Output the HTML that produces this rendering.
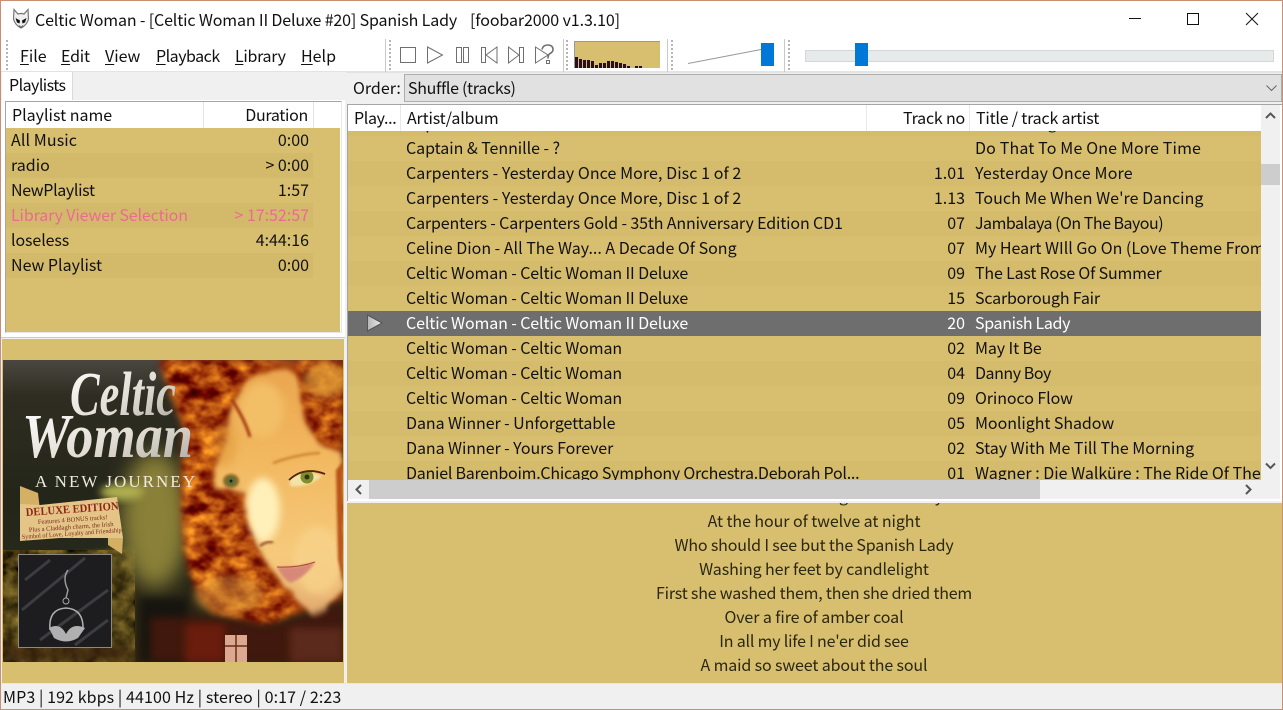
<!DOCTYPE html>
<html><head><meta charset="utf-8">
<style>
html,body{margin:0;padding:0;width:1283px;height:710px;overflow:hidden;background:#f0f0f0}
body{font-family:"Noto Sans CJK SC","Liberation Sans",sans-serif;font-size:16px;color:#111;position:relative}
.a{position:absolute;white-space:nowrap;overflow:hidden}
.t{position:absolute;white-space:nowrap;line-height:25px;height:25px}
.r{text-align:right}
.row{position:absolute;left:0;width:913px;height:25px}
.alt{background:#d5bc6d}
.row .t{top:-1px}
.dots{position:absolute;width:2px;top:40px;height:30px;background:repeating-linear-gradient(to bottom,#b5b5b5 0 2px,transparent 2px 4px)}
.sep{position:absolute;width:1px;top:39px;height:33px;background:#c9c9c9}
.u{text-decoration:underline;text-underline-offset:2px;text-decoration-thickness:1px}
.no{left:519px;width:98px;text-align:right}
.ar{left:58px}
.ti{left:627px}
</style></head><body>
<!-- Title bar -->
<div class="a" style="left:0;top:0;width:1283px;height:38px;background:#fff"></div>
<svg class="a" style="left:11px;top:8px" width="20" height="22" viewBox="0 0 20 22"><path d="M3 1.500 L7 6 Q10 5 13 6 L17 1.500 L17.500 11 Q16 17 10 20 Q4 17 2.500 11Z" fill="#f0f0f0" stroke="#777" stroke-width="1.200"/><path d="M4.500 10 L9 12.500 L8.500 15.500 L6 14.500Z M15.500 10 L11 12.500 L11.500 15.500 L14 14.500Z" fill="#111"/><path d="M8 17.500L10 19.500L12 17.500" stroke="#555" fill="none"/></svg>
<div class="t" style="left:35px;top:7px;letter-spacing:-.14px">Celtic Woman - [Celtic Woman II Deluxe #20] Spanish Lady</div>
<div class="t" style="left:470px;top:7px;letter-spacing:-.1px">[foobar2000 v1.3.10]</div>
<svg class="a" style="left:1120px;top:5px" width="155" height="30" fill="none" stroke="#111" stroke-width="1"><path d="M9 13.500H21"/><rect x="67.500" y="8.500" width="11" height="11"/><path d="M126 8L138 20M138 8L126 20"/></svg>

<!-- Toolbar -->
<div class="a" style="left:0;top:38px;width:1283px;height:34px;background:#fff"></div>
<div class="a" style="left:0;top:71px;width:1283px;height:2px;background:#e3e3e3"></div>
<div class="dots" style="left:6px"></div>
<div class="t" style="left:20px;top:43px"><span class="u">F</span>ile</div>
<div class="t" style="left:61px;top:43px;letter-spacing:-.2px"><span class="u">E</span>dit</div>
<div class="t" style="left:105px;top:43px"><span class="u">V</span>iew</div>
<div class="t" style="left:156px;top:43px;letter-spacing:-.5px"><span class="u">P</span>layback</div>
<div class="t" style="left:235px;top:43px;letter-spacing:-.3px"><span class="u">L</span>ibrary</div>
<div class="t" style="left:301px;top:43px"><span class="u">H</span>elp</div>
<div class="sep" style="left:385px"></div><div class="dots" style="left:389px"></div>
<svg class="a" style="left:395px;top:40px" width="165" height="30" fill="none" stroke="#6f6f6f" stroke-width="1">
<rect x="5.500" y="7.500" width="15" height="15"/>
<path d="M32.500 7 L47.500 15 L32.500 23Z"/>
<rect x="61.500" y="7.500" width="5" height="15"/><rect x="68.500" y="7.500" width="5" height="15"/>
<rect x="86.500" y="7.500" width="4" height="15"/><path d="M102 7 L91 15 L102 23Z"/>
<path d="M113.500 7 L124 15 L113.500 23Z"/><rect x="124.500" y="7.500" width="4" height="15"/>
<path d="M140.500 7 L153 15 L140.500 23Z"/><path d="M147 9.500Q148 5 152.500 5Q158 5 158 9.500Q158 12 155 13.500Q153 14.500 153 18.500" stroke-width="1.600"/><rect x="151.500" y="20.500" width="3" height="3"/></svg>
<div class="sep" style="left:563px"></div><div class="dots" style="left:566px"></div>
<div class="a" style="left:574px;top:41px;width:86px;height:27px;background:#d8bf70;border-top:1px solid #999;border-left:1px solid #999;box-sizing:border-box"></div>
<svg class="a" style="left:575px;top:42px" width="85" height="26" fill="#2a0f1e"><path d="M0 15h3v11H0zM4 17h3v9H4zM8 18h3v8H8zM12 18h3v8h-3zM16 19h3v7h-3zM20 23h3v3h-3zM24 21h3v5h-3zM28 21h3v5h-3zM32 19h3v7h-3zM36 19h3v7h-3zM40 20h3v6h-3zM44 21h3v5h-3zM48 22h3v4h-3zM52 24h3v2h-3zM60 24h3v2h-3zM64 24h3v2h-3z"/></svg>
<div class="sep" style="left:667px"></div><div class="dots" style="left:671px"></div>
<svg class="a" style="left:685px;top:40px" width="95" height="30"><path d="M3 23.500L76 9.500" stroke="#999" stroke-width="1"/><rect x="76" y="3" width="13" height="23" fill="#0078d7"/></svg>
<div class="sep" style="left:784px"></div><div class="dots" style="left:788px"></div>
<div class="a" style="left:805px;top:50px;width:467px;height:10px;background:#e7eaea;border:1px solid #d6d6d6"></div>
<div class="a" style="left:855px;top:43px;width:13px;height:23px;background:#0078d7"></div>

<!-- Playlists panel -->
<div class="a" style="left:1px;top:72px;width:345px;height:266px;background:#f0f0f0"></div>
<div class="a" style="left:2px;top:72px;width:71px;height:30px;background:#fff;border-right:1px solid #d9d9d9;box-sizing:border-box"></div>
<div class="t" style="left:9px;top:72px;letter-spacing:-.55px">Playlists</div>
<div class="a" style="left:1px;top:100px;width:344px;height:238px;background:#fff;border-bottom:1px solid #ccc;box-sizing:border-box"></div>
<div class="a" style="left:5px;top:101px;width:337px;height:232px;border:1px solid #a5a5a5;border-right-color:#e8e8e8;border-bottom-color:#e8e8e8;box-sizing:border-box;background:#fff"></div>
<div class="a" style="left:203px;top:102px;width:1px;height:26px;background:#e3e3e3"></div>
<div class="a" style="left:313px;top:102px;width:1px;height:26px;background:#e3e3e3"></div>
<div class="t" style="left:12px;top:102px">Playlist name</div>
<div class="t r" style="left:204px;width:104px;top:102px;letter-spacing:-.3px">Duration</div>
<div class="a" style="left:6px;top:128px;width:334px;height:204px;background:#d8bf70"></div>
<div class="a" style="left:6px;top:153px;width:307px;height:25px;background:#d3ba6b"></div>
<div class="a" style="left:6px;top:203px;width:307px;height:25px;background:#d3ba6b"></div>
<div class="a" style="left:6px;top:253px;width:307px;height:25px;background:#d3ba6b"></div>
<div class="t" style="left:11px;top:127px;letter-spacing:.1px">All Music</div><div class="t r" style="left:204px;width:105px;top:127px">0:00</div>
<div class="t" style="left:11px;top:152px">radio</div><div class="t r" style="left:204px;width:105px;top:152px">&gt; 0:00</div>
<div class="t" style="left:11px;top:177px;letter-spacing:-.35px">NewPlaylist</div><div class="t r" style="left:204px;width:105px;top:177px">1:57</div>
<div class="t" style="left:11px;top:202px;color:#ec6a92;letter-spacing:-.13px">Library Viewer Selection</div><div class="t r" style="left:204px;width:105px;top:202px;color:#ec6a92">&gt; 17:52:57</div>
<div class="t" style="left:11px;top:227px;letter-spacing:-.1px">loseless</div><div class="t r" style="left:204px;width:105px;top:227px">4:44:16</div>
<div class="t" style="left:11px;top:252px">New Playlist</div><div class="t r" style="left:204px;width:105px;top:252px">0:00</div>

<!-- Album art -->
<div class="a" style="left:2px;top:339px;width:342px;height:344px;background:#d8bf70"></div>
<svg class="a" style="left:3px;top:360px" width="340" height="302" viewBox="3 360 340 302" color-interpolation-filters="sRGB">
<defs>
<filter id="b1" x="-30%" y="-30%" width="160%" height="160%"><feGaussianBlur stdDeviation="10"/></filter>
<filter id="b2" x="-30%" y="-30%" width="160%" height="160%"><feGaussianBlur stdDeviation="4"/></filter>
<filter id="b3" x="-30%" y="-30%" width="160%" height="160%"><feGaussianBlur stdDeviation="1.200"/></filter>
<filter id="hair" x="-5%" y="-5%" width="110%" height="110%" color-interpolation-filters="sRGB">
<feTurbulence type="fractalNoise" baseFrequency=".05 .07" numOctaves="4" seed="7" result="n"/>
<feColorMatrix in="n" type="matrix" values="1.300 0 0 0 .02  1.300 0 0 0 -.38  .35 0 0 0 -.12  0 0 0 0 1" result="c"/>
<feGaussianBlur in="c" stdDeviation=".8" result="c2"/>
<feGaussianBlur in="SourceAlpha" stdDeviation="4" result="soft"/>
<feComposite in="c2" in2="soft" operator="in"/>
</filter>
<filter id="rough" x="-10%" y="-10%" width="120%" height="120%" color-interpolation-filters="sRGB">
<feTurbulence type="fractalNoise" baseFrequency=".05" numOctaves="3" seed="4"/>
<feDisplacementMap in="SourceGraphic" scale="12" xChannelSelector="R" yChannelSelector="G"/>
<feGaussianBlur stdDeviation="2.500"/>
</filter>
<filter id="grain" x="0" y="0" width="100%" height="100%" color-interpolation-filters="sRGB">
<feTurbulence type="fractalNoise" baseFrequency=".07" numOctaves="3" seed="11"/>
<feColorMatrix type="matrix" values="1 0 0 0 -.22  .85 0 0 0 -.2  .4 0 0 0 -.13  0 0 0 0 1" result="c"/>
<feComposite in="c" in2="SourceAlpha" operator="in"/>
</filter>
<linearGradient id="bg" x1="0" y1="0" x2="0" y2="1"><stop offset="0" stop-color="#4a4740"/><stop offset=".12" stop-color="#2f2d22"/><stop offset=".45" stop-color="#24261a"/><stop offset=".65" stop-color="#25281a"/><stop offset="1" stop-color="#332410"/></linearGradient>
<linearGradient id="f" x1="0" y1="0" x2="0" y2="1"><stop offset="0" stop-color="#eaa64e"/><stop offset=".35" stop-color="#f2b860"/><stop offset=".75" stop-color="#f6ca7c"/><stop offset="1" stop-color="#e0a870"/></linearGradient>
<linearGradient id="tx" x1="0" y1="0" x2="1" y2="1"><stop offset="0" stop-color="#fff"/><stop offset=".55" stop-color="#e2ddd4"/><stop offset="1" stop-color="#a9a69e"/></linearGradient>
</defs>
<rect x="3" y="360" width="340" height="302" fill="url(#bg)"/>
<!-- castle and olive glow -->
<rect x="3" y="550" width="132" height="112" filter="url(#grain)"/>
<path d="M3 575L40 570L70 552L135 545V662H3Z" fill="#6b5a20" opacity=".4" filter="url(#b3)"/>
<path d="M3 645H130V662H3Z" fill="#3a200d" opacity=".7" filter="url(#b2)"/>
<ellipse cx="155" cy="520" rx="34" ry="68" fill="#8a8038" filter="url(#b1)"/>
<ellipse cx="122" cy="492" rx="22" ry="8" fill="#b0b050" filter="url(#b2)"/>
<rect x="140" y="598" width="48" height="64" fill="#16150f" filter="url(#b2)"/>
<!-- hair base -->
<path d="M160 360H343V600L260 625L215 612Q188 585 185 540Q180 480 186 430Q172 395 160 360Z" fill="#a8400f" filter="url(#b2)"/>
<!-- face -->
<path d="M257 372Q295 362 302 388Q302 420 320 445L343 450V590L318 620L300 605Q270 572 258 545Q245 510 245 492L214 492L214 465Q230 445 228 420Q235 388 257 372Z" fill="url(#f)" filter="url(#rough)"/>
<ellipse cx="263" cy="510" rx="17" ry="32" fill="#fff0ba" filter="url(#b2)"/>
<ellipse cx="262" cy="410" rx="22" ry="28" fill="#f2be66" filter="url(#b2)"/>
<ellipse cx="318" cy="560" rx="24" ry="34" fill="#f8d28a" filter="url(#b2)" opacity=".8"/>
<!-- hair texture -->
<path d="M160 360H300Q275 362 255 372Q232 385 226 420Q228 445 212 466L212 492L241 494Q243 520 256 550Q270 580 298 608L270 625L215 612Q188 585 185 540Q180 480 186 430Q172 395 160 360Z" filter="url(#hair)"/>
<path d="M298 360H343V446L322 442Q303 420 302 390Z" filter="url(#hair)"/>
<ellipse cx="325" cy="380" rx="22" ry="18" fill="#e8a83c" opacity=".7" filter="url(#b2)"/>
<ellipse cx="228" cy="595" rx="34" ry="20" fill="#d8983c" opacity=".55" filter="url(#b2)"/>
<ellipse cx="225" cy="445" rx="12" ry="22" fill="#e09a3a" opacity=".5" filter="url(#b2)"/>
<path d="M336 470L343 462V580L338 560Z" fill="#b8531a" filter="url(#b3)"/>
<path d="M232 400Q245 420 250 437" stroke="#a63a10" stroke-width="3" fill="none" filter="url(#b3)"/>
<!-- bottom -->
<path d="M150 618Q215 614 262 626Q310 622 343 600V662H150Z" fill="#40180d" filter="url(#b2)"/>
<path d="M185 624H225V662H185Z" fill="#6a1d0c" filter="url(#b2)"/>
<path d="M290 628H343V662H290Z" fill="#5c2a1c" filter="url(#b2)"/>
<rect x="225" y="635" width="22" height="27" fill="#dba98f"/><path d="M236 635V662M225 646H247" stroke="#6a2a1a" stroke-width="1.500"/>
<!-- features -->
<path d="M273 463Q298 454 320 453" stroke="#c67a22" stroke-width="2" fill="none" filter="url(#b3)"/>
<path d="M290 478Q305 468 322 476Q308 488 290 486Z" fill="#f2e3a8" filter="url(#b3)"/>
<circle cx="307" cy="477" r="6.500" fill="#7f8f2c"/><circle cx="307" cy="477" r="2.500" fill="#2e3312"/>
<path d="M289 480Q304 466 325 474" stroke="#55260c" stroke-width="1.800" fill="none"/>
<ellipse cx="231" cy="481" rx="8" ry="7" fill="#8a6a28" filter="url(#b3)"/><circle cx="231" cy="481" r="4.500" fill="#5f6f3a"/><circle cx="231" cy="481" r="1.500" fill="#1f2010"/>
<path d="M260 546Q266 541 273 542" stroke="#7a3010" stroke-width="2" fill="none" filter="url(#b3)"/>
<path d="M277 567Q298 568 315 562Q305 578 290 583Q282 578 277 567Z" fill="#d88878" filter="url(#b3)"/>
<path d="M277 567Q298 568 315 562" stroke="#a84a3a" stroke-width="1" fill="none"/>
<!-- titles -->
<text x="70" y="415" font-family="Liberation Serif,serif" font-style="italic" font-weight="700" font-size="62" fill="url(#tx)" textLength="106" lengthAdjust="spacingAndGlyphs">Celtic</text>
<text x="22" y="457" font-family="Liberation Serif,serif" font-style="italic" font-weight="700" font-size="62" fill="url(#tx)" textLength="171" lengthAdjust="spacingAndGlyphs">Woman</text>
<text x="35" y="487" font-family="Liberation Serif,serif" font-size="17" fill="#eeeadf" textLength="160" lengthAdjust="spacing">A NEW JOURNEY</text>
<!-- banner -->
<path d="M20 486L38 493L40 510L20 505Z M108 535L123 538L122 554L108 545Z" fill="#d3b063"/>
<path d="M20 504L40 505L117 497L123 538L60 538L20 541Z" fill="#e4c587"/>
<text x="26" y="516" font-family="Liberation Serif,serif" font-weight="700" font-size="11.500" fill="#8e2417" transform="rotate(-4 26 516)" textLength="93" lengthAdjust="spacingAndGlyphs">DELUXE EDITION</text>
<text x="38" y="524" font-family="Liberation Serif,serif" font-size="6.500" fill="#7a2a1a" transform="rotate(-4 38 524)">Features 4 BONUS tracks!</text>
<text x="29" y="532" font-family="Liberation Serif,serif" font-size="6.500" fill="#7a2a1a" transform="rotate(-4 29 532)">Plus a Claddagh charm, the Irish</text>
<text x="22" y="539" font-family="Liberation Serif,serif" font-size="6.500" fill="#7a2a1a" transform="rotate(-4 22 539)" textLength="100" lengthAdjust="spacingAndGlyphs">Symbol of Love, Loyalty and Friendship</text>
<!-- charm box -->
<rect x="18.500" y="554.500" width="93" height="93" fill="#1d1d1f" stroke="#8a8a80" stroke-width="1"/>
<path d="M25 580L50 560M22 610L85 558M40 640L108 590M75 645L108 620" stroke="#3b3d40" stroke-width="3"/>
<path d="M68 570Q62 578 68 590L66 598" stroke="#9a9a9a" stroke-width="1.500" fill="none"/><circle cx="66" cy="601" r="3" fill="none" stroke="#aaa"/>
<path d="M50 630Q48 609 66 608Q84 609 83 630" stroke="#b0b0b0" stroke-width="1.500" fill="none"/>
<path d="M49 628Q60 622 66 634Q72 622 85 628L78 638Q66 645 54 638Z" fill="#b0b0b0"/>
</svg>

<!-- Order -->
<div class="t" style="left:353px;top:75px">Order:</div>
<div class="a" style="left:404px;top:74px;width:878px;height:28px;background:#e1e1e1;border:1px solid #adadad;box-sizing:border-box"></div>
<div class="t" style="left:408px;top:75px;letter-spacing:-.3px">Shuffle (tracks)</div>
<svg class="a" style="left:1265px;top:83px" width="14" height="10" fill="none" stroke="#666"><path d="M1.500 2.500L6.500 7.500L11.500 2.500"/></svg>

<!-- Playlist view -->
<div class="a" style="left:347px;top:104px;width:936px;height:397px;background:#fff;border-top:1px solid #a5a5a5;border-left:1px solid #a5a5a5;box-sizing:border-box"></div>
<div class="a" style="left:400px;top:105px;width:1px;height:26px;background:#e8e8e8"></div>
<div class="a" style="left:866px;top:105px;width:1px;height:26px;background:#e8e8e8"></div>
<div class="a" style="left:969px;top:105px;width:1px;height:26px;background:#e8e8e8"></div>
<div class="t" style="left:354px;top:105px;letter-spacing:-.35px">Play...</div>
<div class="t" style="left:407px;top:105px;letter-spacing:-.17px">Artist/album</div>
<div class="t r" style="left:866px;width:99px;top:105px;letter-spacing:-.2px">Track no</div>
<div class="t" style="left:976px;top:105px;letter-spacing:-.2px">Title / track artist</div>

<div class="a" style="left:348px;top:131px;width:913px;height:349px;background:#d8bf70">
<div class="row alt" style="top:-20px"><div class="t ar">Captain &amp; Tennille - Greatest</div><div class="t ti">Something</div></div>
<div class="row" style="top:5px"><div class="t ar" style="letter-spacing:-.05px">Captain &amp; Tennille - ?</div><div class="t ti" style="letter-spacing:.15px">Do That To Me One More Time</div></div>
<div class="row alt" style="top:30px"><div class="t ar" style="letter-spacing:.07px">Carpenters - Yesterday Once More, Disc 1 of 2</div><div class="t no">1.01</div><div class="t ti" style="letter-spacing:.16px">Yesterday Once More</div></div>
<div class="row" style="top:55px"><div class="t ar" style="letter-spacing:.07px">Carpenters - Yesterday Once More, Disc 1 of 2</div><div class="t no">1.13</div><div class="t ti" style="letter-spacing:.03px">Touch Me When We're Dancing</div></div>
<div class="row alt" style="top:80px"><div class="t ar" style="letter-spacing:-.14px">Carpenters - Carpenters Gold - 35th Anniversary Edition CD1</div><div class="t no">07</div><div class="t ti" style="letter-spacing:-.5px">Jambalaya (On The Bayou)</div></div>
<div class="row" style="top:105px"><div class="t ar">Celine Dion - All The Way... A Decade Of Song</div><div class="t no">07</div><div class="t ti">My Heart WIll Go On (Love Theme From 'Titanic')</div></div>
<div class="row alt" style="top:130px"><div class="t ar" style="letter-spacing:-.11px">Celtic Woman - Celtic Woman II Deluxe</div><div class="t no">09</div><div class="t ti" style="letter-spacing:-.17px">The Last Rose Of Summer</div></div>
<div class="row" style="top:155px"><div class="t ar" style="letter-spacing:-.11px">Celtic Woman - Celtic Woman II Deluxe</div><div class="t no">15</div><div class="t ti" style="letter-spacing:-.19px">Scarborough Fair</div></div>
<div class="row" style="top:180px;background:#6e6e6e;color:#fff"><div class="t ar" style="letter-spacing:-.11px">Celtic Woman - Celtic Woman II Deluxe</div><div class="t no">20</div><div class="t ti" style="letter-spacing:-.33px">Spanish Lady</div>
<svg style="position:absolute;left:19px;top:3px" width="16" height="18"><defs><linearGradient id="pl" x1="0" x2="1" y1="0" y2="0"><stop offset="0" stop-color="#b5b5b5"/><stop offset="1" stop-color="#eee"/></linearGradient></defs><path d="M.5 1L15 9L.5 17Z" fill="url(#pl)" stroke="#555"/></svg></div>
<div class="row" style="top:205px"><div class="t ar" style="letter-spacing:-.11px">Celtic Woman - Celtic Woman</div><div class="t no">02</div><div class="t ti" style="letter-spacing:-.1px">May It Be</div></div>
<div class="row alt" style="top:230px"><div class="t ar" style="letter-spacing:-.11px">Celtic Woman - Celtic Woman</div><div class="t no">04</div><div class="t ti" style="letter-spacing:-.45px">Danny Boy</div></div>
<div class="row" style="top:255px"><div class="t ar" style="letter-spacing:-.11px">Celtic Woman - Celtic Woman</div><div class="t no">09</div><div class="t ti" style="letter-spacing:-.08px">Orinoco Flow</div></div>
<div class="row alt" style="top:280px"><div class="t ar" style="letter-spacing:-.07px">Dana Winner - Unforgettable</div><div class="t no">05</div><div class="t ti" style="letter-spacing:-.06px">Moonlight Shadow</div></div>
<div class="row" style="top:305px"><div class="t ar" style="letter-spacing:-.07px">Dana Winner - Yours Forever</div><div class="t no">02</div><div class="t ti">Stay With Me Till The Morning</div></div>
<div class="row alt" style="top:330px"><div class="t ar" style="letter-spacing:-.245px">Daniel Barenboim.Chicago Symphony Orchestra.Deborah Pol...</div><div class="t no">01</div><div class="t ti">Wagner : Die Walküre : The Ride Of The Valkyries</div></div>
</div>

<!-- Scrollbars -->
<div class="a" style="left:1261px;top:105px;width:19px;height:375px;background:#f0f0f0"></div>
<div class="a" style="left:1261px;top:164px;width:19px;height:21px;background:#cdcdcd"></div>
<svg class="a" style="left:1261px;top:105px" width="19" height="375" fill="none" stroke="#555" stroke-width="2"><path d="M5 13L9.500 8.500L14 13M5 358.500L9.500 363L14 358.500"/></svg>
<div class="a" style="left:348px;top:480px;width:932px;height:19px;background:#f0f0f0"></div>
<div class="a" style="left:369px;top:480px;width:671px;height:19px;background:#cdcdcd"></div>
<svg class="a" style="left:348px;top:480px" width="932" height="19" fill="none" stroke="#555" stroke-width="2"><path d="M13 5L8.500 9.500L13 14M898 5L902.500 9.500L898 14"/></svg>

<!-- Lyrics -->
<div class="a" style="left:347px;top:503px;width:936px;height:180px;background:#d8bf70;color:#2b2710;line-height:24px;text-align:center">
<div style="position:absolute;left:0;width:934px;top:-20px">As I came back through Dublin City</div>
<div style="position:absolute;left:0;width:934px;top:5px;letter-spacing:-.07px">At the hour of twelve at night</div>
<div style="position:absolute;left:0;width:934px;top:29px;letter-spacing:-.17px">Who should I see but the Spanish Lady</div>
<div style="position:absolute;left:0;width:934px;top:53px;letter-spacing:-.1px">Washing her feet by candlelight</div>
<div style="position:absolute;left:0;width:934px;top:77px;letter-spacing:-.2px">First she washed them, then she dried them</div>
<div style="position:absolute;left:0;width:934px;top:101px;letter-spacing:-.08px">Over a fire of amber coal</div>
<div style="position:absolute;left:0;width:934px;top:125px;letter-spacing:-.2px">In all my life I ne'er did see</div>
<div style="position:absolute;left:0;width:934px;top:149px;letter-spacing:-.13px">A maid so sweet about the soul</div>
</div>

<!-- Status -->
<div class="a" style="left:0;top:683px;width:1283px;height:27px;background:#f0f0f0;border-top:1px solid #e8e8e8;box-sizing:border-box"></div>
<div class="t" style="left:3px;top:684px;letter-spacing:.1px">MP3 | 192 kbps | 44100 Hz | stereo | 0:17 / 2:23</div>

<!-- Window border -->
<div class="a" style="left:0;top:0;width:1283px;height:710px;border:1px solid #c98f72;box-sizing:border-box;pointer-events:none"></div>
</body></html>
